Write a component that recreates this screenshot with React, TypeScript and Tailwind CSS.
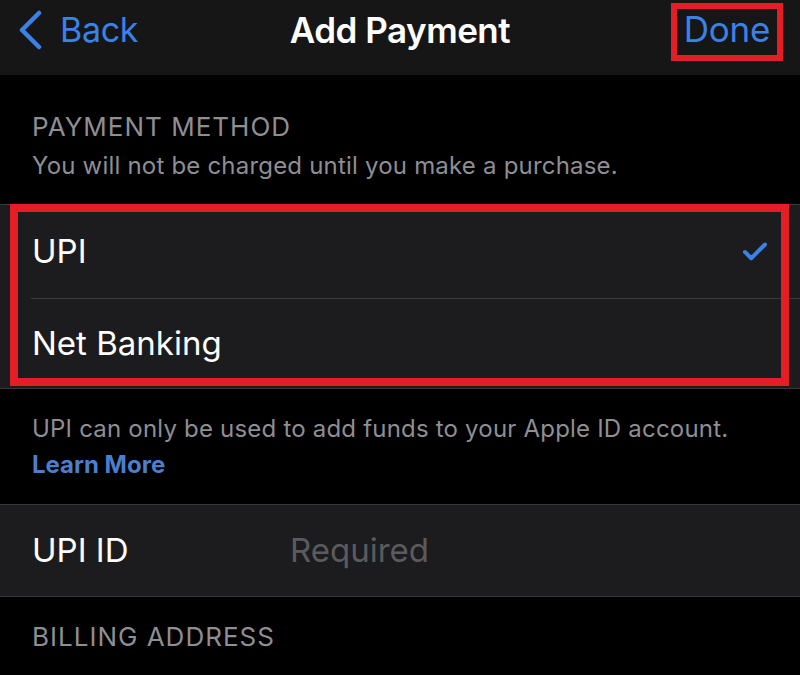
import { Check } from 'lucide-react';

// iOS-style "Add Payment" sheet (dark mode) with highlighted options
export default function App() {
  return (
    <main className="w-[800px] h-[675px] overflow-hidden bg-black text-white font-['Inter','Noto_Sans',sans-serif]">
      {/* Navigation bar */}
      <header className="h-[75px] bg-[#161616] grid grid-cols-[1fr_auto_1fr]">
        <div className="flex items-center pl-[17px] pb-[15px]">
          <svg width="26" height="40" viewBox="0 0 26 40" fill="none" className="mr-[17px]">
            <path d="M22 3 L5 20 L22 37" stroke="#3b82e8" strokeWidth="4.5" strokeLinecap="round" strokeLinejoin="round" />
          </svg>
          <span className="text-[34px] leading-none text-[#3b82e8] tracking-[-0.3px]">Back</span>
        </div>
        <h1 className="self-center pb-[15px] text-[35px] leading-none font-semibold tracking-[-0.5px]">Add Payment</h1>
        <div className="flex justify-end items-start pt-[3px] pr-[17px]">
          <span className="h-[58px] border-[6px] border-[#e41e26] flex items-center px-[7px] pb-[5px] text-[35px] leading-none text-[#3b82e8] tracking-[-0.3px]">
            Done
          </span>
        </div>
      </header>

      {/* Payment method */}
      <section className="px-[32px] pt-[39px] pb-[26px] text-[#8e8e93]">
        <h2 className="text-[26px] leading-none tracking-[1px]">PAYMENT METHOD</h2>
        <p className="mt-[14px] text-[24px] leading-none tracking-[0.2px]">You will not be charged until you make a purchase.</p>
      </section>

      <div className="relative bg-[#1c1c1e] border-y border-[#38383a]">
        <div className="h-[93px] flex items-center justify-between pl-[32px] pr-[30px]">
          <span className="text-[33px] leading-none">UPI</span>
          <Check className="text-[#3b82e8]" size={30} strokeWidth={3.2} />
        </div>
        <div className="ml-[31px] border-t border-[#3a3a3c]" />
        <div className="h-[89px] flex items-center pl-[32px]">
          <span className="text-[33px] leading-none">Net Banking</span>
        </div>
        <div className="absolute left-[10px] right-[11px] -top-[1px] bottom-[2px] border-[8px] border-[#e41e26]" />
      </div>

      <section className="px-[32px] pt-[28px] pb-[27px]">
        <p className="text-[24px] leading-none tracking-[0.2px] text-[#8e8e93]">UPI can only be used to add funds to your Apple ID account.</p>
        <p className="mt-[12px] text-[24px] leading-none font-bold text-[#4a7fcc]">Learn More</p>
      </section>

      <div className="h-[93px] bg-[#1c1c1e] border-y border-[#38383a] flex items-center pl-[32px]">
        <span className="w-[258px] text-[33px] leading-none">UPI ID</span>
        <span className="text-[33px] leading-none text-[#5b5b5f]">Required</span>
      </div>

      <section className="px-[32px] pt-[27px]">
        <h2 className="text-[26px] leading-none tracking-[1px] text-[#8e8e93]">BILLING ADDRESS</h2>
      </section>
    </main>
  );
}
